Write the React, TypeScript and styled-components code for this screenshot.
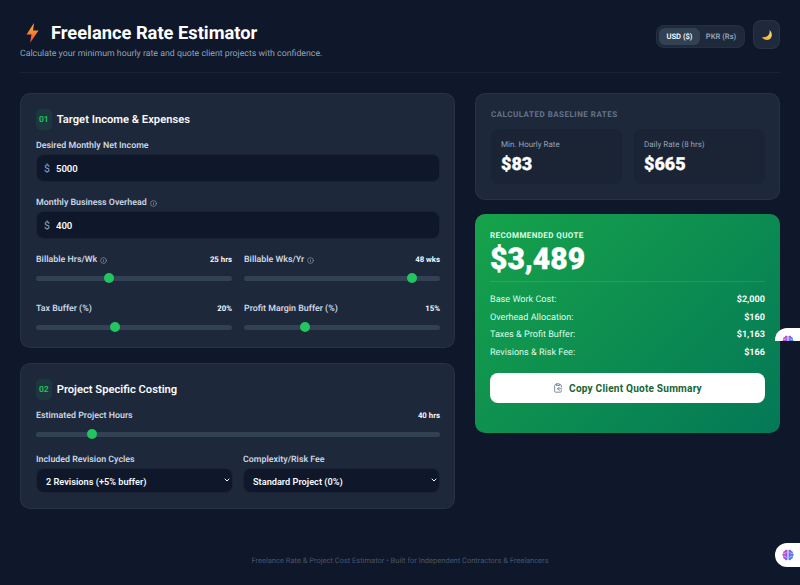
import React from 'react';
import styled, { createGlobalStyle } from 'styled-components';
import { ChevronDown, ClipboardCopy, Info } from 'lucide-react';

const fontStack = '"Roboto", "Open Sans", sans-serif';

const GlobalStyle = createGlobalStyle`
  html, body {
    margin: 0;
    padding: 0;
    height: 100%;
    overflow: hidden;
    background: #0f172a;
    font-family: ${fontStack};
    text-rendering: geometricPrecision;
  }
  * {
    box-sizing: border-box;
  }
`;

const Page = styled.div`
  height: 585px;
  padding: 20px 20px 0;
  display: flex;
  flex-direction: column;
  color: #f8fafc;
`;

const Header = styled.header`
  height: 53px;
  display: flex;
  justify-content: space-between;
  align-items: flex-start;
  border-bottom: 1px solid rgba(255, 255, 255, 0.05);
`;

const TitleRow = styled.div`
  display: flex;
  align-items: center;
  gap: 12px;
  padding-left: 6px;
  height: 25px;
`;

const Title = styled.h1`
  margin: 0;
  padding-top: 2px;
  font-size: 18.3px;
  line-height: 25px;
  font-weight: 700;
  color: #fff;
`;

const Subtitle = styled.p`
  margin: 2px 0 0;
  font-size: 8.77px;
  line-height: 14px;
  color: #94a3b8;
`;

const HeaderActions = styled.div`
  display: flex;
  align-items: center;
  gap: 8px;
  padding-top: 4px;
`;

const Toggle = styled.div`
  display: flex;
  padding: 2px;
  width: 89px;
  height: 23px;
  border-radius: 8px;
  background: #1e293b;
  border: 1px solid rgba(255, 255, 255, 0.03);
`;

const ToggleOption = styled.span<{ $active?: boolean }>`
  flex: ${(p) => (p.$active ? '0 0 41px' : '1')};
  display: flex;
  align-items: center;
  justify-content: center;
  border-radius: 6px;
  font-size: 7.6px;
  font-weight: 600;
  color: ${(p) => (p.$active ? '#f8fafc' : '#94a3b8')};
  background: ${(p) => (p.$active ? '#334155' : 'transparent')};
`;

const ThemeButton = styled.button`
  width: 27px;
  height: 29px;
  margin-top: -4px;
  padding: 0;
  display: flex;
  align-items: center;
  justify-content: center;
  border-radius: 8px;
  border: 1px solid rgba(255, 255, 255, 0.05);
  background: #1e293b;
`;

const Columns = styled.main`
  display: grid;
  grid-template-columns: 435px 305px;
  gap: 20px;
  margin-top: 20px;
`;

const Column = styled.div<{ $gap: number }>`
  display: flex;
  flex-direction: column;
  gap: ${(p) => p.$gap}px;
`;

const Card = styled.section`
  padding: 15px 14px 15px 15px;
  border-radius: 10px;
  background: #1d283a;
  border: 1px solid rgba(255, 255, 255, 0.05);
`;

const SectionHead = styled.div`
  display: flex;
  align-items: center;
  gap: 5px;
  height: 21px;
  margin-bottom: 9px;
`;

const StepBadge = styled.span`
  height: 21px;
  padding: 0 3px;
  display: flex;
  align-items: center;
  justify-content: center;
  border-radius: 5px;
  font-size: 8.5px;
  font-weight: 600;
  color: #22c55e;
  background: rgba(34, 197, 94, 0.1);
`;

const SectionTitle = styled.h2`
  margin: 0;
  font-size: 11.2px;
  font-weight: 600;
  color: #f8fafc;
`;

const Field = styled.div`
  margin-bottom: 14px;
`;

const Label = styled.label`
  display: flex;
  align-items: center;
  gap: 3px;
  padding-top: 1px;
  font-size: 8.85px;
  line-height: 12px;
  font-weight: 600;
  color: #cbd5e1;
`;

const FieldLabel = styled(Label)`
  margin-bottom: 2px;
`;

const InputWrap = styled.div`
  height: 28px;
  display: flex;
  align-items: center;
  gap: 6px;
  padding: 0 7px;
  border-radius: 8px;
  background: #0f172a;
  border: 1px solid rgba(255, 255, 255, 0.05);
`;

const Currency = styled.span`
  font-size: 10.5px;
  color: #94a3b8;
`;

const NumberInput = styled.input`
  flex: 1;
  min-width: 0;
  border: 0;
  outline: 0;
  padding: 1px 0 0;
  background: transparent;
  font: 600 9.6px ${fontStack};
  color: #f8fafc;
`;

const SliderGrid = styled.div`
  display: grid;
  grid-template-columns: 1fr 1fr;
  column-gap: 12px;
  row-gap: 19px;
`;

const SliderHead = styled.div`
  display: flex;
  justify-content: space-between;
  align-items: center;
  margin-bottom: 7px;
`;

const SliderValue = styled.span`
  font-size: 7.8px;
  line-height: 12px;
  font-weight: 700;
  color: #f8fafc;
`;

const Range = styled.input`
  appearance: none;
  display: block;
  width: 100%;
  height: 10px;
  margin: 0;
  background: transparent;

  &::-webkit-slider-runnable-track {
    height: 5px;
    border-radius: 3px;
    background: #334155;
  }
  &::-webkit-slider-thumb {
    appearance: none;
    width: 10px;
    height: 10px;
    margin-top: -2.5px;
    border-radius: 50%;
    background: #22c55e;
  }
`;

const SelectGrid = styled.div`
  display: grid;
  grid-template-columns: 197px 197px;
  gap: 10px;
  margin-top: 14px;
`;

const SelectWrap = styled.div`
  position: relative;
  color: #f8fafc;

  svg {
    position: absolute;
    right: 2px;
    top: 8px;
    pointer-events: none;
  }
`;

const Select = styled.select`
  appearance: none;
  display: block;
  width: 100%;
  height: 25px;
  padding: 1px 9px 0;
  border-radius: 8px;
  border: 1px solid rgba(255, 255, 255, 0.05);
  background: #0f172a;
  font: 600 9.2px ${fontStack};
  color: #f8fafc;
  outline: 0;
`;

const Overline = styled.div`
  font-size: 8px;
  line-height: 11px;
  font-weight: 700;
  letter-spacing: 0.5px;
  color: #64748b;
  margin: 0 0 9px;
`;

const StatGrid = styled.div`
  display: grid;
  grid-template-columns: 1fr 1fr;
  gap: 12px;
`;

const StatBox = styled.div`
  height: 55px;
  padding: 10px 10px;
  border-radius: 8px;
  background: #1a2435;
`;

const StatLabel = styled.div`
  font-size: 8px;
  line-height: 12px;
  color: #94a3b8;
`;

const StatValue = styled.div`
  margin-top: 2px;
  font-size: 18px;
  line-height: 23px;
  font-weight: 900;
  color: #fff;
  -webkit-text-stroke: 0.3px #fff;
`;

const QuoteCard = styled.section`
  height: 219px;
  padding: 16px 15px 15px;
  border-radius: 10px;
  background: linear-gradient(135deg, #16a34a 0%, #047857 100%);
`;

const QuoteLabel = styled.div`
  font-size: 8px;
  line-height: 11px;
  font-weight: 700;
  letter-spacing: 0.4px;
  color: #dcfce7;
`;

const QuoteTotal = styled.div`
  font-size: 30px;
  line-height: 38px;
  font-weight: 900;
  color: #fff;
  -webkit-text-stroke: 0.4px #fff;
`;

const Breakdown = styled.div`
  margin-top: 2px;
  padding-top: 10px;
  border-top: 1px solid rgba(255, 255, 255, 0.1);
  display: flex;
  flex-direction: column;
`;

const BreakdownRow = styled.div`
  display: flex;
  justify-content: space-between;
  height: 17.5px;
  font-size: 9.1px;
  line-height: 17.5px;
  color: #dcfce7;
`;

const BreakdownValue = styled.span`
  font-weight: 700;
  color: #f8fafc;
`;

const CopyButton = styled.button`
  width: 100%;
  height: 30px;
  margin-top: 11px;
  display: flex;
  align-items: center;
  justify-content: center;
  gap: 6px;
  border: 0;
  border-radius: 8px;
  background: #fff;
  font: 700 10.1px ${fontStack};
  letter-spacing: 0.2px;
  color: #166534;

  svg {
    color: #64748b;
  }
`;

const Footer = styled.footer`
  margin-top: auto;
  padding-bottom: 18px;
  text-align: center;
  font-size: 7.5px;
  line-height: 12px;
  color: #475569;
`;

const FloatTab = styled.div<{ $top: number; $height: number; $clipped?: boolean }>`
  position: fixed;
  right: 0;
  top: ${(p) => p.$top}px;
  width: 25px;
  height: ${(p) => p.$height}px;
  padding: ${(p) => (p.$clipped ? '7px 0 0 7px' : '6px 0 0 7px')};
  overflow: hidden;
  background: #fff;
  border-radius: ${(p) => (p.$clipped ? '12px 0 0 0' : '12px 0 0 12px')};
`;

const BoltIcon = () => (
  <svg width="13" height="20" viewBox="0 0 13 20">
    <defs>
      <linearGradient id="bolt" x1="0.5" y1="0" x2="0.5" y2="1">
        <stop offset="0" stopColor="#fbbf24" />
        <stop offset="1" stopColor="#ef4444" />
      </linearGradient>
    </defs>
    <path d="M8 0 L0.5 11.5 L5.5 11.5 L4 20 L12.5 7.5 L7 7.5 Z" fill="url(#bolt)" />
  </svg>
);

const MoonIcon = () => (
  <svg width="12" height="12" viewBox="0 0 12 12">
    <defs>
      <linearGradient id="moon" x1="1" y1="0" x2="0" y2="1">
        <stop offset="0" stopColor="#fde68a" />
        <stop offset="1" stopColor="#f59e0b" />
      </linearGradient>
    </defs>
    <path d="M8.5 1 C9.5 5 7 8.5 1 8.2 C2.5 11 6.5 11.8 9 10 C11.5 8 11.5 3.5 8.5 1 Z" fill="url(#moon)" />
  </svg>
);

const BrainIcon = () => (
  <svg width="12" height="12" viewBox="0 0 12 12" style={{ display: 'block' }}>
    <defs>
      <linearGradient id="brain" x1="0" y1="0" x2="1" y2="0.4">
        <stop offset="0" stopColor="#ec4899" />
        <stop offset="0.55" stopColor="#8b5cf6" />
        <stop offset="1" stopColor="#3b82f6" />
      </linearGradient>
    </defs>
    <path
      d="M5.5 1 C4.5 0.3 3 0.7 2.7 1.9 C1.5 2 0.8 3.2 1.2 4.2 C0.2 5 0.2 6.8 1.2 7.6 C0.9 8.8 1.7 10 2.8 10 C3.2 11.3 4.7 11.6 5.5 10.8 Z M6.5 1 C7.5 0.3 9 0.7 9.3 1.9 C10.5 2 11.2 3.2 10.8 4.2 C11.8 5 11.8 6.8 10.8 7.6 C11.1 8.8 10.3 10 9.2 10 C8.8 11.3 7.3 11.6 6.5 10.8 Z"
      fill="url(#brain)"
    />
    <path
      d="M1.5 4.2 C2.5 4.8 3.5 4.4 4.2 3.4 M1.5 7.4 C2.7 7 3.8 7.4 4.4 8.6 M10.5 4.2 C9.5 4.8 8.5 4.4 7.8 3.4 M10.5 7.4 C9.3 7 8.2 7.4 7.6 8.6"
      fill="none"
      stroke="#fff"
      strokeWidth="0.7"
      opacity="0.8"
    />
  </svg>
);

const HintIcon = () => <Info size={7} color="#94a3b8" />;

function Slider(props: {
  label: string;
  value: string;
  current: number;
  min: number;
  max: number;
  hint?: boolean;
}) {
  return (
    <div>
      <SliderHead>
        <Label>
          {props.label}
          {props.hint && <HintIcon />}
        </Label>
        <SliderValue>{props.value}</SliderValue>
      </SliderHead>
      <Range type="range" min={props.min} max={props.max} defaultValue={props.current} />
    </div>
  );
}

function MoneyField(props: { label: string; value: number; hint?: boolean }) {
  return (
    <Field>
      <FieldLabel>
        {props.label}
        {props.hint && <HintIcon />}
      </FieldLabel>
      <InputWrap>
        <Currency>$</Currency>
        <NumberInput type="text" defaultValue={props.value} />
      </InputWrap>
    </Field>
  );
}

const breakdown = [
  ['Base Work Cost:', '$2,000'],
  ['Overhead Allocation:', '$160'],
  ['Taxes & Profit Buffer:', '$1,163'],
  ['Revisions & Risk Fee:', '$166'],
];

const App = () => {
  return (
    <Page>
      <GlobalStyle />
      <Header>
        <div>
          <TitleRow>
            <BoltIcon />
            <Title>Freelance Rate Estimator</Title>
          </TitleRow>
          <Subtitle>Calculate your minimum hourly rate and quote client projects with confidence.</Subtitle>
        </div>
        <HeaderActions>
          <Toggle>
            <ToggleOption $active>USD ($)</ToggleOption>
            <ToggleOption>PKR (Rs)</ToggleOption>
          </Toggle>
          <ThemeButton aria-label="Toggle theme">
            <MoonIcon />
          </ThemeButton>
        </HeaderActions>
      </Header>

      <Columns>
        <Column $gap={15}>
          <Card>
            <SectionHead>
              <StepBadge>01</StepBadge>
              <SectionTitle>Target Income &amp; Expenses</SectionTitle>
            </SectionHead>
            <MoneyField label="Desired Monthly Net Income" value={5000} />
            <MoneyField label="Monthly Business Overhead" value={400} hint />
            <SliderGrid>
              <Slider label="Billable Hrs/Wk" value="25 hrs" current={25} min={5} max={60} hint />
              <Slider label="Billable Wks/Yr" value="48 wks" current={48} min={20} max={52} hint />
              <Slider label="Tax Buffer (%)" value="20%" current={20} min={0} max={50} />
              <Slider label="Profit Margin Buffer (%)" value="15%" current={15} min={0} max={50} />
            </SliderGrid>
          </Card>

          <Card>
            <SectionHead>
              <StepBadge>02</StepBadge>
              <SectionTitle>Project Specific Costing</SectionTitle>
            </SectionHead>
            <Slider label="Estimated Project Hours" value="40 hrs" current={40} min={1} max={300} />
            <SelectGrid>
              <div>
                <FieldLabel>Included Revision Cycles</FieldLabel>
                <SelectWrap>
                  <Select defaultValue="2">
                    <option value="2">2 Revisions (+5% buffer)</option>
                  </Select>
                  <ChevronDown size={8} strokeWidth={3} />
                </SelectWrap>
              </div>
              <div>
                <FieldLabel>Complexity/Risk Fee</FieldLabel>
                <SelectWrap>
                  <Select defaultValue="standard">
                    <option value="standard">Standard Project (0%)</option>
                  </Select>
                  <ChevronDown size={8} strokeWidth={3} />
                </SelectWrap>
              </div>
            </SelectGrid>
          </Card>
        </Column>

        <Column $gap={14}>
          <Card>
            <Overline>CALCULATED BASELINE RATES</Overline>
            <StatGrid>
              <StatBox>
                <StatLabel>Min. Hourly Rate</StatLabel>
                <StatValue>$83</StatValue>
              </StatBox>
              <StatBox>
                <StatLabel>Daily Rate (8 hrs)</StatLabel>
                <StatValue>$665</StatValue>
              </StatBox>
            </StatGrid>
          </Card>

          <QuoteCard>
            <QuoteLabel>RECOMMENDED QUOTE</QuoteLabel>
            <QuoteTotal>$3,489</QuoteTotal>
            <Breakdown>
              {breakdown.map(([name, amount]) => (
                <BreakdownRow key={name}>
                  <span>{name}</span>
                  <BreakdownValue>{amount}</BreakdownValue>
                </BreakdownRow>
              ))}
            </Breakdown>
            <CopyButton>
              <ClipboardCopy size={10} />
              Copy Client Quote Summary
            </CopyButton>
          </QuoteCard>
        </Column>
      </Columns>

      <Footer>Freelance Rate &amp; Project Cost Estimator • Built for Independent Contractors &amp; Freelancers</Footer>

      <FloatTab $top={328} $height={13} $clipped>
        <BrainIcon />
      </FloatTab>
      <FloatTab $top={543} $height={24}>
        <BrainIcon />
      </FloatTab>
    </Page>
  );
};

export default App;
